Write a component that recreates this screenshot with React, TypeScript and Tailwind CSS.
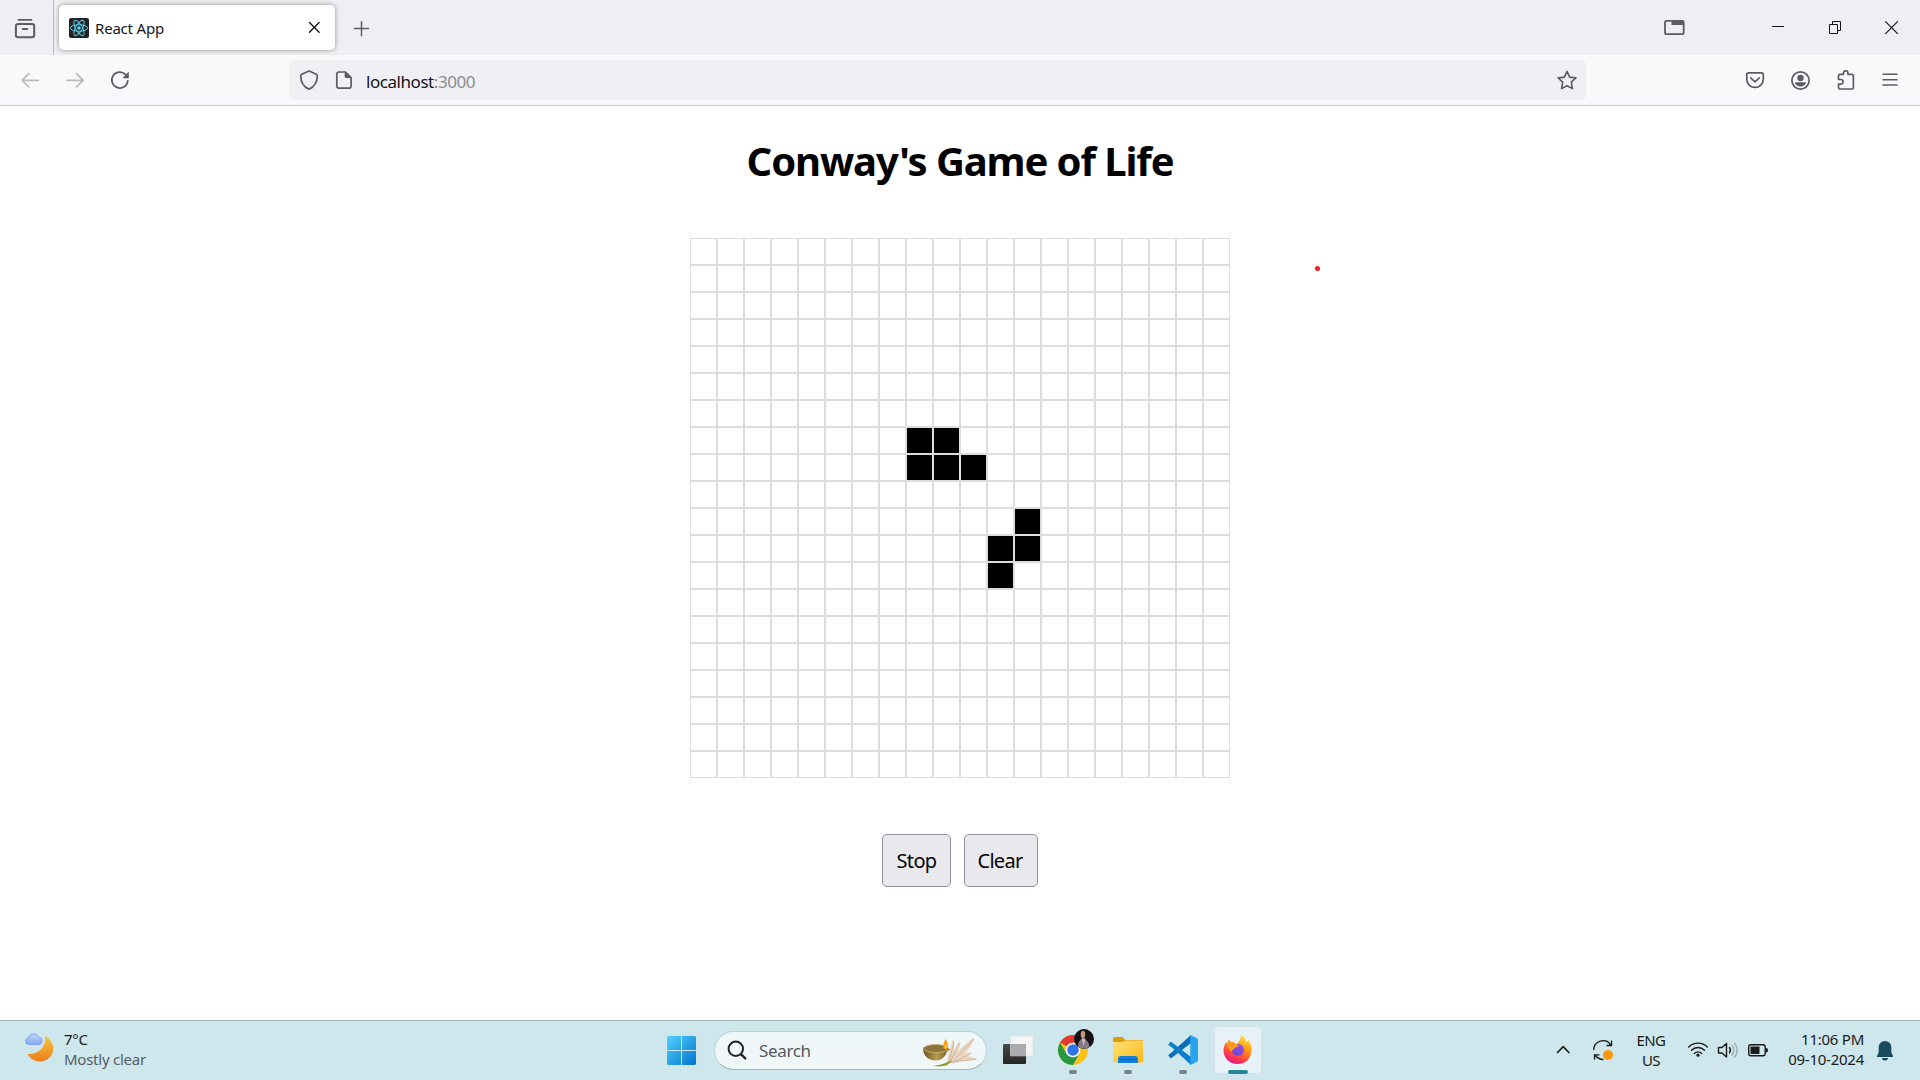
import type { ReactNode } from "react";

const LIVE = new Set(["7-8", "7-9", "8-8", "8-9", "8-10", "10-12", "11-11", "11-12", "12-11"]);

type IconProps = { box: string; w: number; h: number; className?: string; children: ReactNode };

function Icon({ box, w, h, className = "", children }: IconProps) {
  return (
    <svg viewBox={box} width={w} height={h} fill="none" className={"shrink-0 " + className}>
      {children}
    </svg>
  );
}

function TabStrip() {
  return (
    <div className="flex h-[55px] items-start bg-[#efeef3] text-[#5b5b66]">
      <Icon box="0 0 53 55" w={53} h={55}>
        <path d="M18.500 19.800h13" stroke="currentColor" strokeWidth="1.800" strokeLinecap="round" />
        <rect x="15.900" y="23.900" width="18.300" height="13.300" rx="2.200" stroke="currentColor" strokeWidth="2" />
        <path d="M22.800 29h4.400" stroke="currentColor" strokeWidth="2" strokeLinecap="round" />
      </Icon>
      <div className="h-full w-px shrink-0 bg-[#b9b8bf]" />
      <div className="ml-[5px] mt-[5px] flex h-[45px] w-[276px] shrink-0 items-center rounded-[5px] bg-white pl-[10px] shadow-[0_0_5px_rgba(0,0,0,0.4)]">
        <Icon box="0 0 20 20" w={20} h={20}>
          <rect width="20" height="20" rx="2" fill="#222" />
          <g stroke="#5bcbe8" strokeWidth="1">
            <ellipse cx="10" cy="10" rx="8.6" ry="3.3" />
            <ellipse cx="10" cy="10" rx="8.6" ry="3.3" transform="rotate(60 10 10)" />
            <ellipse cx="10" cy="10" rx="8.6" ry="3.3" transform="rotate(120 10 10)" />
          </g>
          <circle cx="10" cy="10" r="1.7" fill="#61dafb" />
        </Icon>
        <span className="ml-[6px] mt-[2px] w-[200px] text-[15px] tracking-[-0.2px] text-[#15141a]">React App</span>
        <Icon box="295 5 40 45" w={40} h={45}>
          <path d="M309.500 22.500l9.600 9.800M319.100 22.500l-9.600 9.800" stroke="#15141a" strokeWidth="1.400" strokeLinecap="round" />
        </Icon>
      </div>
      <Icon box="335 0 60 55" w={60} h={55}>
        <path d="M361.500 21.700v14M354.500 28.600h14" stroke="currentColor" strokeWidth="1.500" strokeLinecap="round" />
      </Icon>
      <div className="flex-1" />
      <Icon box="1650 0 270 55" w={270} h={55}>
        <rect x="1665" y="20.900" width="18.700" height="13.300" rx="1.800" stroke="currentColor" strokeWidth="1.800" />
        <path d="M1671.500 20.500h12.500v4.500h-12.500z" fill="currentColor" />
        <path d="M1772 26.500h12" stroke="#15141a" />
        <path d="M1829.500 24.500h8v9h-8zM1832.500 24.500v-3h8v9h-3" stroke="#15141a" />
        <path d="M1885.300 21.300l12.500 12.500M1897.800 21.300l-12.500 12.500" stroke="#15141a" strokeWidth="1.200" />
      </Icon>
    </div>
  );
}

function Toolbar() {
  return (
    <div className="flex h-[51px] items-start border-b border-[#cbcace] bg-[#f9f9fb] text-[#5b5b66]">
      <Icon box="0 55 289 50" w={289} h={50}>
        <g strokeWidth="1.700" strokeLinecap="round" strokeLinejoin="round">
          <path d="M38.200 80.300H22.500M28.800 73.600l-6.700 6.700 6.700 6.700" stroke="#bab9c0" />
          <path d="M67 80.300h15.700M76.500 73.600l6.700 6.700-6.700 6.700" stroke="#bab9c0" />
          <path d="M127.800 80.800a8 8 0 1 1-2.400-6.500" stroke="currentColor" />
        </g>
        <path d="M128.800 71.500v6.800h-6.300z" fill="currentColor" />
      </Icon>
      <div className="mt-[5px] flex h-10 w-[1297px] shrink-0 items-center rounded-[5px] bg-[#f0eff4]">
        <Icon box="289 60 77 40" w={77} h={40}>
          <path d="M309 71l7.400 3.300c.6.3.9.700.9 1.400 0 6-2.300 10.800-8.300 13.500-6-2.700-8.300-7.500-8.300-13.500 0-.7.3-1.100.9-1.400z" stroke="currentColor" strokeWidth="1.700" strokeLinejoin="round" />
          <path d="M339 72h6.500l5.600 5.500V86a2.200 2.200 0 0 1-2.200 2.200H339a2.200 2.200 0 0 1-2.200-2.200V74.200A2.200 2.200 0 0 1 339 72z" stroke="currentColor" strokeWidth="1.700" />
          <path d="M344.700 71.500l6.800 6.500h-5.300a1.500 1.500 0 0 1-1.500-1.500z" fill="currentColor" />
        </Icon>
        <span className="mt-[3px] flex-1 text-[17px] tracking-[-0.45px] text-[#15141a]">
          localhost<span className="text-[#8c8b93]">:3000</span>
        </span>
        <Icon box="1546 60 40 40" w={40} h={40}>
          <path d="M1567 71.400l2.600 5.700 6.300.8-4.600 4.300 1.100 6.400-5.400-2.900-5.400 2.900 1.100-6.400-4.600-4.300 6.300-.8z" stroke="currentColor" strokeWidth="1.600" strokeLinejoin="round" />
        </Icon>
      </div>
      <Icon box="1586 55 334 50" w={334} h={50}>
        <g stroke="currentColor" strokeWidth="1.700" strokeLinecap="round" strokeLinejoin="round">
          <path d="M1748.800 72.800h12.500a2 2 0 0 1 2 2v4.400a8.200 8.200 0 0 1-16.500 0v-4.400a2 2 0 0 1 2-2zM1750.700 77.800l4.300 4 4.300-4" />
          <circle cx="1800.500" cy="80.500" r="8.600" />
          <path d="M1838.500 78.500v-2.700a1.500 1.500 0 0 1 1.500-1.500h3.500v-1.300a2.200 2.200 0 0 1 4.400 0v1.300h4a1.500 1.500 0 0 1 1.500 1.500v11.700a1.500 1.500 0 0 1-1.500 1.500h-11.900a1.500 1.500 0 0 1-1.500-1.500v-3.300h2.200a2.200 2.200 0 0 0 0-4.700h-2.200z" />
          <path d="M1883 74.300h14M1883 79.700h14M1883 85.100h14" strokeWidth="1.500" />
        </g>
        <circle cx="1800.500" cy="78" r="3.200" fill="currentColor" />
        <path d="M1795 82.300h11c0 2.500-3 4.200-5.500 4.200s-5.500-1.700-5.500-4.200z" fill="currentColor" />
      </Icon>
    </div>
  );
}

function Game() {
  return (
    <main className="relative flex h-[914px] flex-col items-center bg-white text-black">
      <h1 className="mt-[25px] h-[60px] whitespace-nowrap text-[40px] font-bold leading-[60px] tracking-[-1.1px]">Conway's Game of Life</h1>
      <div className="mt-[47px] grid grid-cols-[repeat(20,27px)]">
        {Array.from({ length: 400 }, (_, i) => {
          const alive = LIVE.has(`${Math.floor(i / 20)}-${i % 20}`);
          return <div key={i} className={alive ? "size-[27px] border border-[#ddd] bg-black" : "size-[27px] border border-[#ddd] bg-white"} />;
        })}
      </div>
      <div className="mt-14 flex gap-[13px]">
        <button className="h-[53px] w-[69px] rounded-[5px] border border-[#8f8f9d] bg-[#e9e9ed] text-[20px] tracking-[-0.65px]">Stop</button>
        <button className="h-[53px] w-[74px] rounded-[5px] border border-[#8f8f9d] bg-[#e9e9ed] pr-[2px] text-[20px] tracking-[-0.7px]">Clear</button>
      </div>
      <div className="absolute left-[1315px] top-[160px] size-[5px] rounded-full bg-[#ed1c24]" />
    </main>
  );
}

function Taskbar() {
  return (
    <footer className="flex h-[60px] items-start border-t border-[#a5b6bf] bg-[#cee7ec] text-[#1b1b1b]">
      <Icon box="0 1021 64 59" w={64} h={59}>
        <defs>
          <linearGradient id="moon" x1="0" y1="0" x2="0" y2="1"><stop stopColor="#f8c53c" /><stop offset="1" stopColor="#ee7d1b" /></linearGradient>
          <linearGradient id="cloud" x1="0" y1="0" x2="0" y2="1"><stop stopColor="#c3d7fa" /><stop offset="1" stopColor="#82a8f0" /></linearGradient>
        </defs>
        <path d="M45 1036c5 2.500 8.200 7 8.200 12.500 0 7.500-6 13-13.200 13-5.500 0-10-2.800-12.300-7.500 9 .5 19-5.500 17.300-18z" fill="url(#moon)" />
        <path d="M28.500 1044.500a3.300 3.300 0 0 1-.3-6.500 5.700 5.700 0 0 1 10.600-1 3.900 3.900 0 0 1 .7 7.500z" fill="url(#cloud)" stroke="#7197e6" strokeWidth=".8" />
      </Icon>
      <div className="mt-[8px] w-[603px] text-[15px] leading-5 tracking-[-0.25px]">
        <div>7°C</div>
        <div className="text-[#526065]">Mostly clear</div>
      </div>
      <Icon box="667 1021 47 59" w={47} h={59}>
        <defs><linearGradient id="win" x1="0" y1="0" x2="1" y2="1"><stop stopColor="#50d2fc" /><stop offset="1" stopColor="#0671ce" /></linearGradient></defs>
        <path d="M668.500 1036H681v14h-14v-12.500q0-1.500 1.500-1.500zM682 1036h12.500q1.500 0 1.500 1.500V1050h-14zM667 1051h14v14h-12.500q-1.500 0-1.500-1.500zM682 1051h14v12.500q0 1.500-1.500 1.500H682z" fill="url(#win)" />
      </Icon>
      <div className="mt-[10px] flex h-[39px] w-[273px] shrink-0 items-center rounded-full border border-[#b9d3d9] border-b-[#9eb5bc] bg-[#eff7f9]">
        <Icon box="715 1032 44 37" w={44} h={37}>
          <circle cx="735.800" cy="1048.800" r="7.200" stroke="#242424" strokeWidth="2" />
          <path d="M741.200 1054.300l4 4" stroke="#242424" strokeWidth="2.400" strokeLinecap="round" />
        </Icon>
        <span className="flex-1 text-[17px] tracking-[-0.35px] text-[#55595b]">Search</span>
        <Icon box="916 1032 70 37" w={70} h={37}>
          <defs><linearGradient id="bowl" x1="0" y1="0" x2="1" y2="0"><stop stopColor="#65501e" /><stop offset=".5" stopColor="#b99a50" /><stop offset="1" stopColor="#6e5723" /></linearGradient></defs>
          <path d="M946 1064c2-8 4-17 7-25 2 4 1 8 1 12 2-4 4-7 6-10 1 4-1 7-2 10 5-5 11-10 16-14-1 7-5 12-9 16 3-1 6-1 8 0-3 1-5 2-8 3 5 0 9 1 13 4-10 1-22 0-32 4z" fill="#ead7c2" />
          <path d="M949 1063l5-22M950 1063l9-20M951 1063l23-24M952 1063l18-9M953 1062l23-3" stroke="#c5a482" strokeWidth=".7" />
          <path d="M933 1066c8-1 14-3 19-6-3 6-9 7-19 6z" fill="#8b9623" />
          <path d="M923 1048c0 7 5 12.500 12.500 12.500 7 0 10.500-5 11.500-9l3-2c-5-4-27-4-27-1.500z" fill="url(#bowl)" />
          <ellipse cx="936" cy="1048.500" rx="12.500" ry="4" fill="#8c7337" stroke="#d0b878" strokeWidth=".8" />
          <path d="M945.500 1039c-2.500 5-3.500 10 .5 10.500 3-1.500 2.500-6-.5-10.500z" fill="#ff9b0b" />
          <path d="M945.700 1044c-1 2-1 4 .3 4.500 1.200-1 1-3-.3-4.500z" fill="#ffe15a" />
        </Icon>
      </div>
      <Icon box="987 1021 275 59" w={275} h={59}>
        <defs>
          <linearGradient id="folder" x1="0" y1="0" x2="1" y2="1"><stop stopColor="#ffe27a" /><stop offset="1" stopColor="#fbb917" /></linearGradient>
          <linearGradient id="fox" x1=".8" y1="0" x2=".3" y2="1"><stop stopColor="#fff44f" /><stop offset=".4" stopColor="#ff980e" /><stop offset=".75" stopColor="#ff3d4d" /><stop offset="1" stopColor="#e31587" /></linearGradient>
          <linearGradient id="globe" x1="1" y1="0" x2="0" y2="1"><stop stopColor="#9b4cf5" /><stop offset="1" stopColor="#6546c4" /></linearGradient>
          <linearGradient id="dark" x1="0" y1="0" x2="0" y2="1"><stop stopColor="#4b4b4b" /><stop offset="1" stopColor="#252525" /></linearGradient>
        </defs>
        <rect x="1003" y="1044" width="23" height="20" rx="1" fill="url(#dark)" />
        <path d="M1010.500 1036H1033v20h-22.500z" fill="#f4f5f6" stroke="#d6dcdd" strokeWidth=".5" />
        <path d="M1010.500 1044H1026v12h-15.500z" fill="#a9acad" />
        <circle cx="1073" cy="1050" r="15" fill="#fbc116" />
        <path d="M1073 1050L1060 1042.500a15 15 0 0 1 26 0H1073z" fill="#e33b2e" />
        <path d="M1060 1042.500a15 15 0 0 0 13 22.500l6.500-11.200-13-.1z" fill="#269a43" />
        <circle cx="1073" cy="1050" r="7.300" fill="#fff" />
        <circle cx="1073" cy="1050" r="5.800" fill="#2d75e8" />
        <circle cx="1084" cy="1039" r="10" fill="#141013" />
        <path d="M1078 1046.500c0-4 2-7.500 5-8 3.500.5 6 4 6.500 8-3 3-8.500 3-11.500 0z" fill="#857986" />
        <path d="M1081.500 1038.500l2.300 7 1.700-7z" fill="#cbbdc0" />
        <ellipse cx="1083" cy="1034.500" rx="2.300" ry="3.700" fill="#c29a78" />
        <path d="M1113 1038.500q0-1.500 1.500-1.500h8l3 3h16q1.500 0 1.500 1.500v8h-30z" fill="#e09c08" />
        <path d="M1113 1042h10l3-1.500h15.500q1.500 0 1.500 1.500v20.500h-30z" fill="url(#folder)" />
        <path d="M1118 1063v-4q0-3 3-3h14q3 0 3 3v4z" fill="#1280d6" />
        <path d="M1121.500 1059.500h13" stroke="#07559e" strokeWidth="1.200" strokeLinecap="round" />
        <path d="M1191 1035l-19.500 17.500-3.300 2.500 1.800 2.700q.8.600 1.800 0L1191 1043z" fill="#0b6eb9" />
        <path d="M1191 1065l-19.500-18-3.300-2 1.800-2.700q.8-.6 1.800 0L1191 1057z" fill="#0c7fcc" />
        <path d="M1190.300 1035l6.500 3q1.200.6 1.200 2v20q0 1.400-1.200 2l-6.500 3z" fill="#26a4ef" />
        <rect x="1214.500" y="1026.500" width="47" height="47" rx="4" fill="#e7f2f8" stroke="#d5e3e8" />
        <path d="M1241 1035c5 3 5 5 5.500 7 1.500-.5 1.500-1.500 1.500-2.500 3.500 4 4 8 3.500 12-1 8-6.500 12.500-14 12.500-8 0-14-6-14-13.500 0-4 1.500-6.500 3-8.500v2l3-5 1 4.500c2-.5 4-.5 5.500.5 2 0 5-5 5-9z" fill="url(#fox)" />
        <circle cx="1238" cy="1050" r="6" fill="url(#globe)" />
        <path d="M1227 1043c3-2 7-1.500 9 1l3 1c-.5 2-3 2-4.500 3-.5 2.500-3 2-4 4-1.500-4-3-4-3.500-9z" fill="#ff9a1f" />
        <g fill="#788184">
          <rect x="1069" y="1070" width="8" height="4" rx="2" />
          <rect x="1124" y="1070" width="8" height="4" rx="2" />
          <rect x="1179" y="1070" width="8" height="4" rx="2" />
        </g>
        <rect x="1228" y="1070" width="20" height="4" rx="2" fill="#258594" />
      </Icon>
      <div className="flex-1" />
      <Icon box="1550 1021 76 59" w={76} h={59}>
        <path d="M1557.500 1052.500l5.700-5.800 5.700 5.800" stroke="currentColor" strokeWidth="1.700" strokeLinecap="round" strokeLinejoin="round" />
        <path d="M1593.700 1050a9.300 9.300 0 0 1 17-5.200M1611.500 1040.500v5h-5M1603.500 1059.500c-4-.1-6.500-1.600-8.700-4.500M1594.500 1059.800v-5h5" stroke="currentColor" strokeWidth="1.300" />
        <circle cx="1608" cy="1055" r="5" fill="#fb9709" />
      </Icon>
      <div className="mt-[9px] w-[50px] text-center text-[15px] leading-5 tracking-[-0.6px]">
        <div>ENG</div>
        <div>US</div>
      </div>
      <Icon box="1676 1021 104 59" w={104} h={59}>
        <g stroke="currentColor" strokeWidth="1.400" strokeLinecap="round">
          <path d="M1688.700 1047a13 13 0 0 1 18.600 0M1691.500 1050.300a9 9 0 0 1 13 0M1694.400 1053.400a5 5 0 0 1 7.200 0" />
          <path d="M1718.500 1047.500h3.500l4.500-4v13.500l-4.500-4h-3.500zM1729.500 1047.500q1.800 2.700 0 5.400" strokeLinejoin="round" />
          <path d="M1732 1045.300q3.600 4.900 0 9.800M1734.500 1043.200q5.500 7 0 14" stroke="#9aadb1" />
          <rect x="1748.700" y="1044.700" width="16.500" height="11" rx="2.200" />
        </g>
        <circle cx="1698" cy="1055.200" r="1.600" fill="currentColor" />
        <rect x="1750.500" y="1046.500" width="9" height="7.400" rx=".7" fill="currentColor" />
        <path d="M1766 1048q2 0 2 2.200t-2 2.200z" fill="currentColor" />
      </Icon>
      <div className="mt-[8px] w-[86px] whitespace-nowrap pr-[2px] text-right text-[15px] leading-5 tracking-[-0.25px]">
        <div>11:06 PM</div>
        <div>09-10-2024</div>
      </div>
      <Icon box="1866 1021 54 59" w={54} h={59}>
        <path d="M1885 1041a6.300 6.300 0 0 1 6.300 6.300v5l1.700 3.700v1h-16v-1l1.700-3.700v-5a6.300 6.300 0 0 1 6.300-6.300zM1882 1058h6a3 2.500 0 0 1-6 0z" fill="#174b5d" />
      </Icon>
    </footer>
  );
}

export default function App() {
  return (
    <div className="flex h-[1080px] w-[1920px] flex-col overflow-hidden font-['Noto_Sans',sans-serif]">
      <TabStrip />
      <Toolbar />
      <Game />
      <Taskbar />
    </div>
  );
}
